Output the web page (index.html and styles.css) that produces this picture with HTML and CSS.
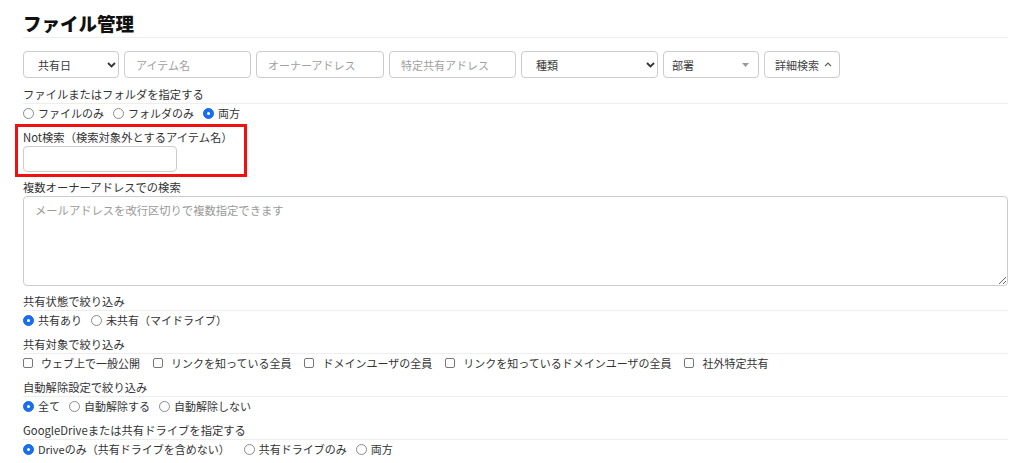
FILE: index.html
```html
<!DOCTYPE html>
<html lang="ja">
<head>
<meta charset="utf-8">
<title>ファイル管理</title>
<link rel="stylesheet" href="styles.css">
</head>
<body>
<div class="page">
  <h1 class="title">ファイル管理</h1>

  <div class="search-row">
    <div class="field select w-date"><span class="val">共有日</span>
      <svg class="chev" width="9" height="6" viewBox="0 0 9 6"><path d="M1 1l3.5 3.5L8 1" fill="none" stroke="#333" stroke-width="1.8"/></svg>
    </div>
    <input class="field input w-item" type="text" placeholder="アイテム名">
    <input class="field input w-owner" type="text" placeholder="オーナーアドレス">
    <input class="field input w-share" type="text" placeholder="特定共有アドレス">
    <div class="field select w-kind"><span class="val">種類</span>
      <svg class="chev" width="9" height="6" viewBox="0 0 9 6"><path d="M1 1l3.5 3.5L8 1" fill="none" stroke="#333" stroke-width="1.8"/></svg>
    </div>
    <div class="field select2 w-dept"><span class="val">部署</span>
      <svg class="tri" width="7" height="4" viewBox="0 0 7 4"><path d="M0 0h7L3.5 4z" fill="#999"/></svg>
    </div>
    <button class="field btn w-btn" type="button">詳細検索
      <svg class="caret" width="8" height="5" viewBox="0 0 8 5"><path d="M1 4.2L4 1.2l3 3" fill="none" stroke="#555" stroke-width="1.2"/></svg>
    </button>
  </div>

  <div class="group first">
    <div class="group-label">ファイルまたはフォルダを指定する</div>
    <div class="options">
      <label class="opt"><input type="radio" name="ft">ファイルのみ</label>
      <label class="opt"><input type="radio" name="ft">フォルダのみ</label>
      <label class="opt"><input type="radio" name="ft" checked>両方</label>
    </div>
  </div>

  <div class="highlight">
    <div class="plain-label">Not検索（検索対象外とするアイテム名）</div>
    <input class="field input w-not" type="text">
  </div>

  <div class="plain-label multi-label">複数オーナーアドレスでの検索</div>
  <textarea class="area" placeholder="メールアドレスを改行区切りで複数指定できます"></textarea>

  <div class="group">
    <div class="group-label">共有状態で絞り込み</div>
    <div class="options">
      <label class="opt"><input type="radio" name="st" checked>共有あり</label>
      <label class="opt"><input type="radio" name="st">未共有（マイドライブ）</label>
    </div>
  </div>

  <div class="group">
    <div class="group-label">共有対象で絞り込み</div>
    <div class="options checks">
      <label class="chk"><input type="checkbox">ウェブ上で一般公開</label>
      <label class="chk"><input type="checkbox">リンクを知っている全員</label>
      <label class="chk"><input type="checkbox">ドメインユーザの全員</label>
      <label class="chk"><input type="checkbox">リンクを知っているドメインユーザの全員</label>
      <label class="chk"><input type="checkbox">社外特定共有</label>
    </div>
  </div>

  <div class="group">
    <div class="group-label">自動解除設定で絞り込み</div>
    <div class="options">
      <label class="opt"><input type="radio" name="ar" checked>全て</label>
      <label class="opt"><input type="radio" name="ar">自動解除する</label>
      <label class="opt"><input type="radio" name="ar">自動解除しない</label>
    </div>
  </div>

  <div class="group">
    <div class="group-label">GoogleDriveまたは共有ドライブを指定する</div>
    <div class="options">
      <label class="opt wide"><input type="radio" name="dr" checked>Driveのみ（共有ドライブを含めない）</label>
      <label class="opt"><input type="radio" name="dr">共有ドライブのみ</label>
      <label class="opt"><input type="radio" name="dr">両方</label>
    </div>
  </div>
</div>
</body>
</html>
```

FILE: styles.css
```css
html, body {
  margin: 0;
  padding: 0;
  background: #fff;
}
body {
  font-family: "Noto Sans CJK JP", "Noto Sans", "Liberation Sans", sans-serif;
  color: #333;
  font-size: 11.3px;
}
.page {
  width: 985px;
  padding: 10px 0 0 23px;
}
.title {
  margin: 0;
  font-size: 18.5px;
  line-height: 26px;
  font-weight: 900;
  color: #111;
  padding-bottom: 1px;
  border-bottom: 1px solid #eee;
}
.search-row {
  display: flex;
  gap: 5px;
  margin-top: 13px;
  height: 27px;
}
.field {
  box-sizing: border-box;
  height: 27px;
  border: 1px solid #ccc;
  border-radius: 4px;
  background: #fff;
  font-family: inherit;
  font-size: 11px;
  color: #333;
  margin: 0;
}
.input {
  padding: 0 11px;
  outline: none;
}
.input::placeholder { color: #a0a0a0; }
.select, .select2, .btn {
  display: flex;
  align-items: center;
  justify-content: space-between;
}
.select { padding: 0 2px 0 14px; }
.select2 { padding: 0 9px 0 8px; }
.val { color: #3a3a3a; }
.btn {
  padding: 0 7px 0 10px;
  cursor: pointer;
  color: #444;
  gap: 5px;
}
.w-date { width: 96px; }
.w-item { width: 127px; }
.w-owner { width: 128px; }
.w-share { width: 127px; }
.w-kind { width: 137px; }
.w-dept { width: 96px; }
.w-btn { width: 76px; }
.w-not { width: 154px; height: 26px; display: block; }

.group { margin-top: 6px; }
.group.first { margin-top: 7px; }
.group-label {
  line-height: 18px;
  border-bottom: 1px solid #eee;
}
.options {
  display: flex;
  align-items: center;
  height: 18px;
  font-size: 11px;
}
.opt {
  display: flex;
  align-items: center;
  gap: 4px;
  margin-right: 9px;
}
.opt.wide { margin-right: 14px; }
.chk {
  display: flex;
  align-items: center;
  gap: 8px;
  margin-right: 13px;
}
.opt input[type="radio"] {
  appearance: none;
  -webkit-appearance: none;
  box-sizing: border-box;
  width: 11px;
  height: 11px;
  margin: 0;
  border: 1px solid #8a8a8a;
  border-radius: 50%;
  background: #fff;
  position: relative;
}
.opt input[type="radio"]:checked {
  border-color: #1767e8;
  background: #1a6ff0;
}
.opt input[type="radio"]:checked::after {
  content: "";
  position: absolute;
  left: 3px;
  top: 3px;
  width: 3px;
  height: 3px;
  border-radius: 50%;
  background: #fff;
}
.chk input[type="checkbox"] {
  appearance: none;
  -webkit-appearance: none;
  box-sizing: border-box;
  width: 10px;
  height: 10px;
  margin: 0;
  border: 1px solid #777;
  border-radius: 2px;
  background: #fff;
}

.highlight {
  box-sizing: border-box;
  width: 232px;
  margin: 2px 0 0 -8px;
  border: 3px solid #f01010;
  padding: 1px 5px 2px 5px;
}
.plain-label {
  line-height: 18px;
  color: #333;
}
.multi-label { margin-top: 1px; }
.area {
  display: block;
  box-sizing: border-box;
  width: 985px;
  height: 90px;
  border: 1px solid #ccc;
  border-radius: 4px;
  padding: 5px 11px;
  font-family: inherit;
  font-size: 11.3px;
  color: #333;
  margin: 0 0 1px 0;
  resize: both;
  outline: none;
}
.area::placeholder { color: #999; }
```
